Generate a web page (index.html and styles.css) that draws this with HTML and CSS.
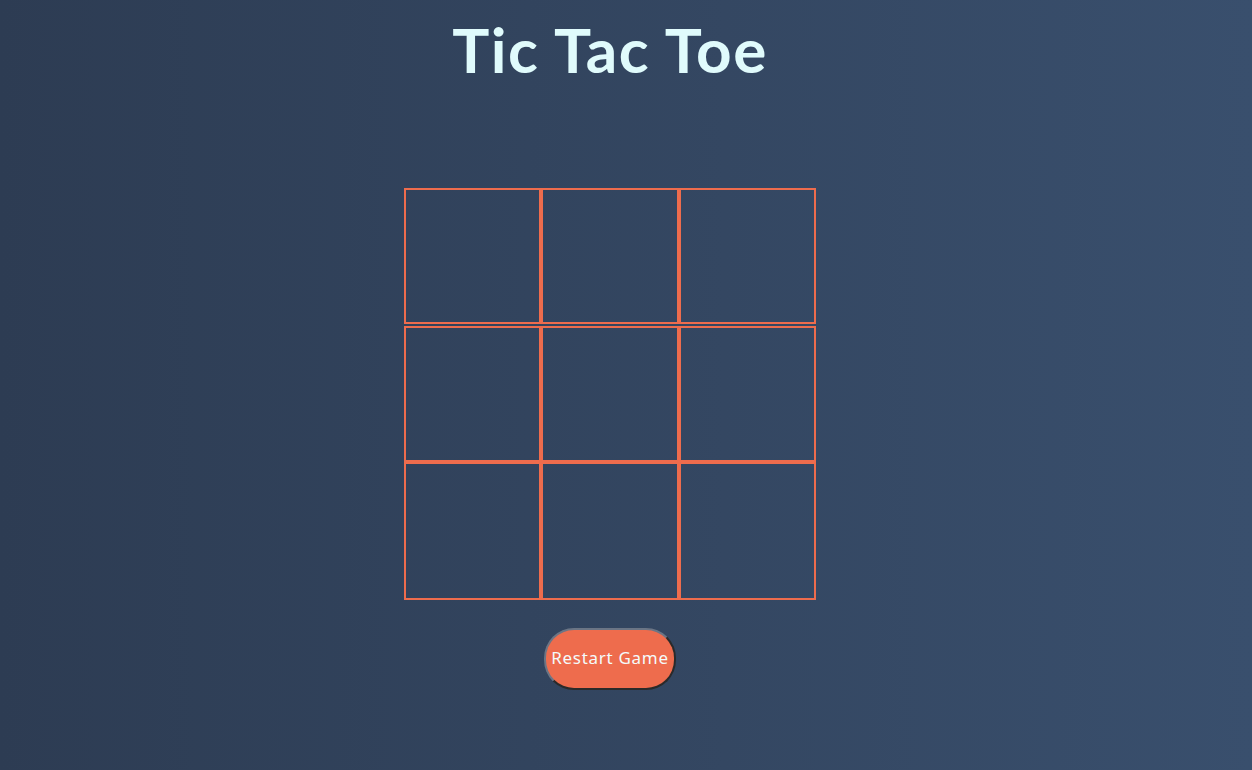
FILE: index.html
```html
<!DOCTYPE html>
<html lang="en">
<head>
<meta charset="utf-8">
<title>Tic Tac Toe</title>
<link rel="stylesheet" href="styles.css">
</head>
<body>
<main class="app">
  <h1 class="title">Tic Tac Toe</h1>
  <div class="board">
    <div class="cell"></div><div class="cell"></div><div class="cell"></div>
    <div class="cell"></div><div class="cell"></div><div class="cell"></div>
    <div class="cell"></div><div class="cell"></div><div class="cell"></div>
  </div>
  <button class="restart" type="button">Restart Game</button>
</main>
</body>
</html>
```
FILE: styles.css
```css
html, body {
  height: 100%;
}
body {
  margin: 0;
  background: linear-gradient(to right, #2d3c53, #394f6d);
  font-family: "Lato", "Noto Sans", sans-serif;
}
.app {
  width: 1220px;
  display: flex;
  flex-direction: column;
  align-items: center;
}
.title {
  margin: 9px 0 0;
  font-size: 62px;
  line-height: 80px;
  font-weight: 700;
  color: #e0fbfc;
  letter-spacing: 1.5px;
}
.board {
  margin-top: 99px;
  width: 412px;
  display: grid;
  grid-template-columns: repeat(3, 1fr);
  grid-template-rows: 138px 136px 138px;
}
.cell {
  border: 2px solid #ee6c4d;
}
.cell:nth-child(-n+3) {
  margin-bottom: 2px;
}
.restart {
  margin-top: 28px;
  width: 132px;
  height: 62px;
  padding: 0 0 3px;
  background: #ee6c4d;
  color: #f4fbfb;
  font-family: "Noto Sans", "Open Sans", sans-serif;
  font-size: 17px;
  letter-spacing: 0.7px;
  border-radius: 30px;
  border-style: solid;
  border-width: 2px;
  border-color: #6b7585 #2a2a2a #2a2a2a #6b7585;
}
```
